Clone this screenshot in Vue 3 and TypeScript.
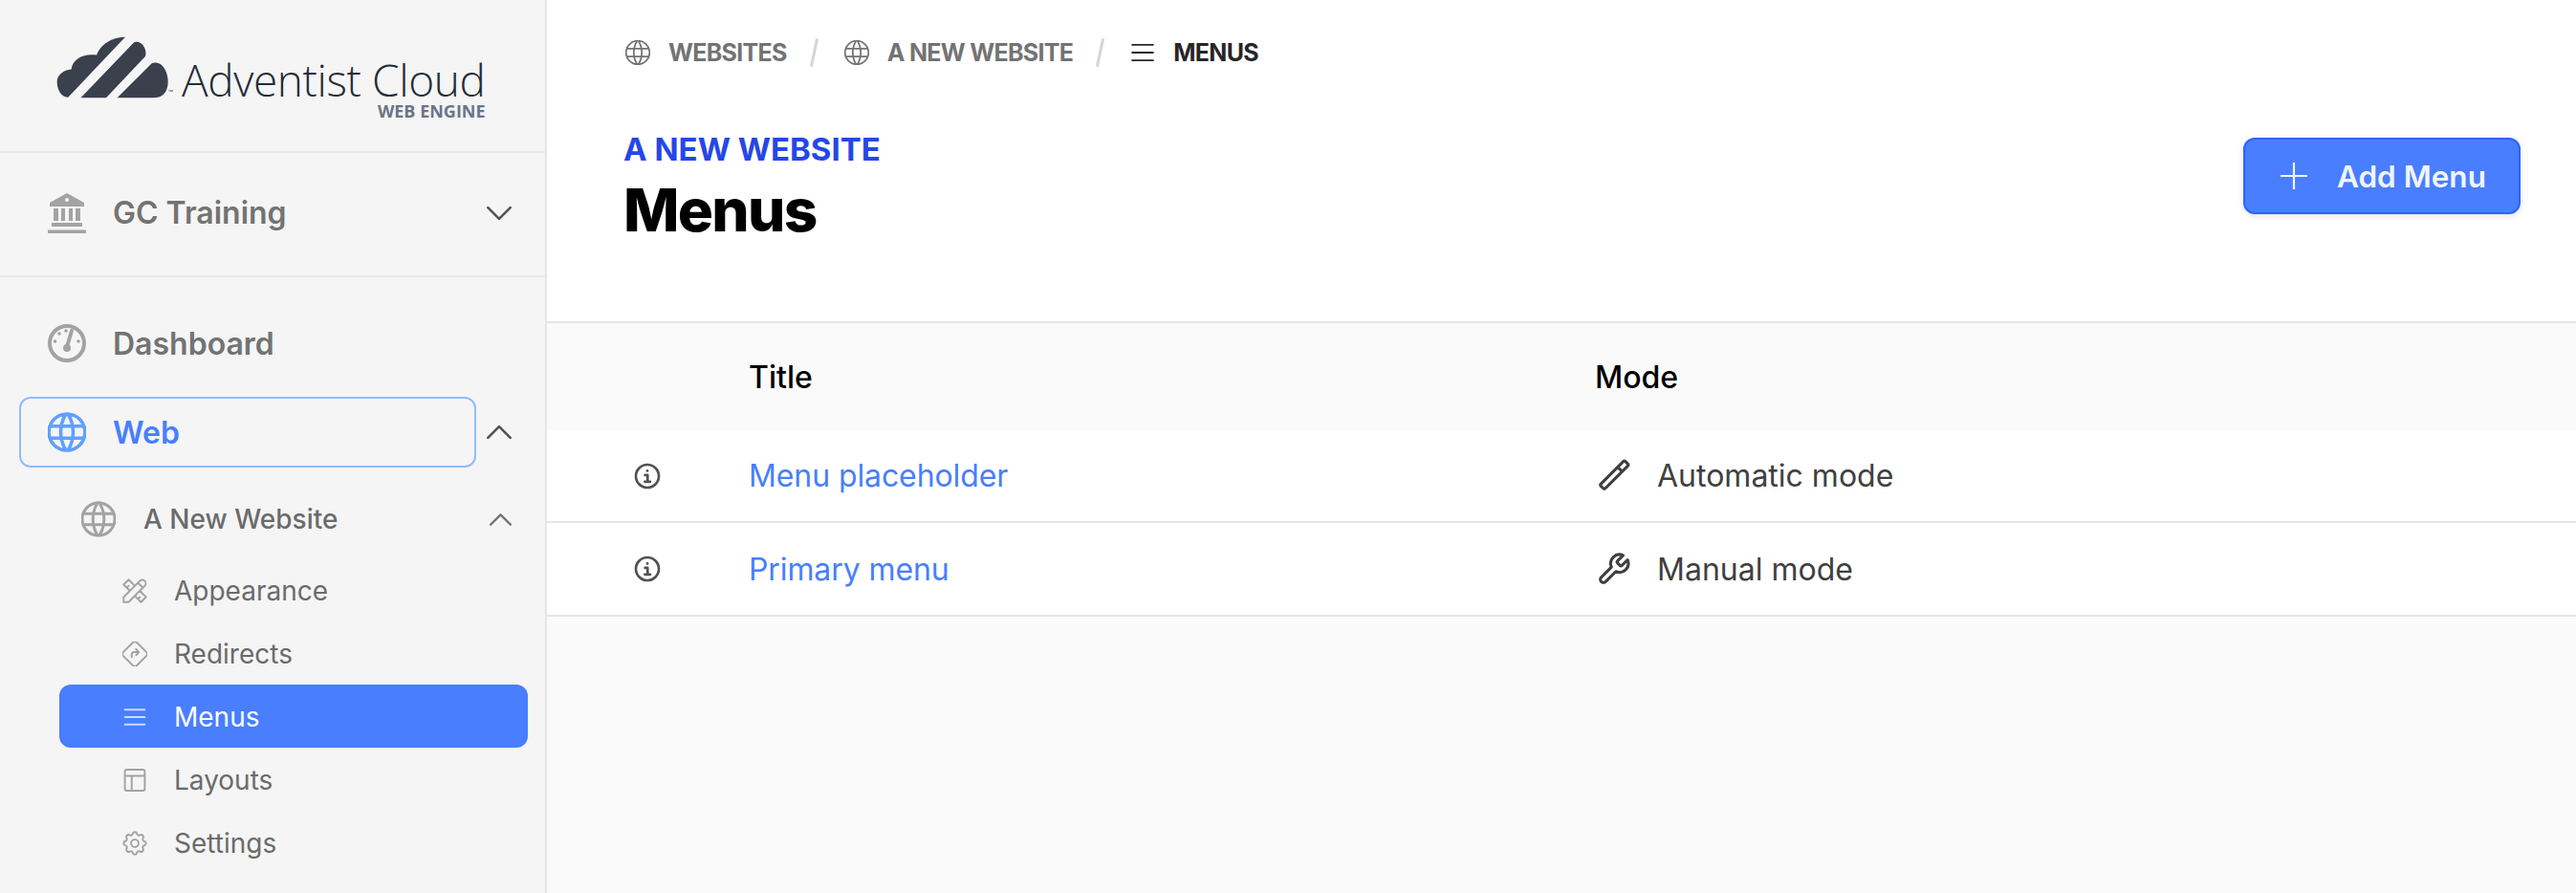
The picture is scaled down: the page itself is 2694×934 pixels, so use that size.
<script setup lang="ts">
const circle = 'M3 12a9 9 0 1 0 18 0a9 9 0 1 0-18 0'

const icons: Record<string, string> = {
  globe: `${circle}M3.6 9h16.8M3.6 15h16.8M11.5 3a17 17 0 0 0 0 18M12.5 3a17 17 0 0 1 0 18`,
  tools: 'M3 21h4l13-13a1.5 1.5 0 0 0-4-4L3 17v4M14.5 5.5l4 4M12 8L7 3 3 7l5 5M7 8L5.5 9.5M16 12l5 5-4 4-5-5M16 17l-1.5 1.5',
  redirect: 'M10.6 2.6a2 2 0 0 1 2.8 0l8 8a2 2 0 0 1 0 2.8l-8 8a2 2 0 0 1-2.8 0l-8-8a2 2 0 0 1 0-2.8zM9.5 14.5v-2a2 2 0 0 1 2-2h3.5M13 8l2.2 2.5-2.2 2.5',
  menu: 'M4 6h16M4 12h16M4 18h16',
  layout: 'M5.5 3.5h13a1.5 1.5 0 0 1 1.5 1.5v14a1.5 1.5 0 0 1-1.5 1.5h-13a1.5 1.5 0 0 1-1.5-1.5V5a1.5 1.5 0 0 1 1.5-1.5zM4 8.5h16M9.5 8.5v12',
  settings: 'M10.325 4.317c.426-1.756 2.924-1.756 3.35 0a1.724 1.724 0 0 0 2.573 1.066c1.543-.94 3.31.826 2.37 2.37a1.724 1.724 0 0 0 1.065 2.572c1.756.426 1.756 2.924 0 3.35a1.724 1.724 0 0 0-1.066 2.573c.94 1.543-.826 3.31-2.37 2.37a1.724 1.724 0 0 0-2.572 1.065c-.426 1.756-2.924 1.756-3.35 0a1.724 1.724 0 0 0-2.573-1.066c-1.543.94-3.31-.826-2.37-2.37a1.724 1.724 0 0 0-1.065-2.572c-1.756-.426-1.756-2.924 0-3.35a1.724 1.724 0 0 0 1.066-2.573c-.94-1.543.826-3.31 2.37-2.37 1 .608 2.296.07 2.572-1.065zM9 12a3 3 0 1 0 6 0a3 3 0 1 0-6 0',
  info: `${circle}M11.9 7.8h.2M10.2 11.2h2v5M10 16.4h4.2`,
  pencil: 'M18.6 2.4a1 1 0 0 1 1.4 0l1.6 1.6a1 1 0 0 1 0 1.4L6.4 20.6a1 1 0 0 1-1.4 0l-1.6-1.6a1 1 0 0 1 0-1.4zM14.8 6.2l3 3',
  wrench: 'M14.7 6.3a1 1 0 0 0 0 1.4l1.6 1.6a1 1 0 0 0 1.4 0l3.77-3.77a6 6 0 0 1-7.94 7.94l-6.91 6.91a2.12 2.12 0 0 1-3-3l6.91-6.91a6 6 0 0 1 7.94-7.94l-3.76 3.76z',
  plus: 'M12 3v18M3 12h18',
  chevronDown: 'M3 7.5l9 9 9-9',
  chevronUp: 'M3 16.5l9-9 9 9',
}

const subItems = [
  {label: 'Appearance', icon: 'tools'},
  {label: 'Redirects', icon: 'redirect'},
  {label: 'Menus', icon: 'menu', active: true},
  {label: 'Layouts', icon: 'layout'},
  {label: 'Settings', icon: 'settings'},
]

const crumbs = [
  {label: 'Websites', icon: 'globe'},
  {label: 'A New Website', icon: 'globe'},
  {label: 'Menus', icon: 'menu', current: true},
]

const rows = [
  {title: 'Menu placeholder', mode: 'Automatic mode', icon: 'pencil'},
  {title: 'Primary menu', mode: 'Manual mode', icon: 'wrench'},
]
</script>

<template>
  <div class="app">
    <aside class="sidebar">
      <div class="brand">
        <svg class="cloud" viewBox="55 40 362 205">
          <path d="M275 48L95 238C75 240 60 215 60 190C60 168 80 152 105 150C108 120 140 98 185 105C195 75 230 48 275 48Z" />
          <path d="M135 240L300 68C315 55 340 72 340 100C340 106 338 110 334 114L215 240Z" />
          <path d="M250 240L358 132C385 118 410 150 410 190C410 222 392 240 365 240Z" />
        </svg>
        <span class="tm">™</span>
        <div class="wordmark">
          <span class="wordmark-name">Adventist Cloud</span>
          <span class="wordmark-sub">WEB ENGINE</span>
        </div>
      </div>

      <div class="org">
        <svg class="org-icon" viewBox="0 0 40 44">
          <path d="M20 1L38 11V15H2V11ZM20 6a2 2 0 1 0 .01 0ZM6 17h5v13H6ZM14 17h4v13h-4ZM22 17h4v13h-4ZM29 17h5v13h-5ZM4 32h32v4H4ZM1 39.5h38a1.6 1.6 0 0 1 0 3.5H1a1.6 1.6 0 0 1 0-3.5Z" />
        </svg>
        <span class="org-name">GC Training</span>
        <svg class="chevron" viewBox="2 2 20 20"><path :d="icons.chevronDown" /></svg>
      </div>

      <nav class="nav">
        <div class="nav-row">
          <a class="nav-top">
            <svg class="nav-icon gauge" viewBox="0 0 40 44">
              <circle cx="20" cy="22" r="18" />
              <path class="needle" d="M25 9L20.5 24" />
              <circle class="dot" cx="20" cy="27" r="4" />
              <circle class="dot" cx="12" cy="12" r="1.8" />
              <circle class="dot" cx="19" cy="9" r="1.8" />
              <circle class="dot" cx="7.5" cy="20" r="1.8" />
              <circle class="dot" cx="32" cy="20" r="1.8" />
            </svg>
            <span>Dashboard</span>
          </a>
        </div>
        <div class="nav-row web-row">
          <a class="nav-top selected">
            <svg class="nav-icon globe" viewBox="2.5 2.5 19 19"><path :d="icons.globe" /></svg>
            <span>Web</span>
          </a>
          <svg class="chevron" viewBox="2 2 20 20"><path :d="icons.chevronUp" /></svg>
        </div>

        <div class="site">
          <svg class="site-icon" viewBox="2.5 2.5 19 19"><path :d="icons.globe" /></svg>
          <span class="site-name">A New Website</span>
          <svg class="chevron small" viewBox="2 2 20 20"><path :d="icons.chevronUp" /></svg>
        </div>

        <ul class="sub-list">
          <li v-for="item in subItems" :key="item.label" class="sub-item" :class="{active: item.active}">
            <svg class="sub-icon" viewBox="2 2 20 20"><path :d="icons[item.icon]" /></svg>
            <span>{{ item.label }}</span>
          </li>
        </ul>
      </nav>
    </aside>

    <main class="main">
      <header class="header">
        <div class="breadcrumbs">
          <template v-for="(crumb, i) in crumbs" :key="crumb.label">
            <span v-if="i > 0" class="crumb-sep"></span>
            <span class="crumb" :class="{current: crumb.current}">
              <svg class="crumb-icon" viewBox="2.5 2.5 19 19"><path :d="icons[crumb.icon]" /></svg>
              {{ crumb.label }}
            </span>
          </template>
        </div>
        <div class="title-row">
          <div class="title-block">
            <div class="eyebrow">A NEW WEBSITE</div>
            <h1 class="title">Menus</h1>
          </div>
          <button class="add-btn">
            <svg class="add-icon" viewBox="3 3 18 18"><path :d="icons.plus" /></svg>
            Add Menu
          </button>
        </div>
      </header>

      <div class="table">
        <div class="table-head">
          <span></span>
          <span>Title</span>
          <span>Mode</span>
        </div>
        <div v-for="row in rows" :key="row.title" class="table-row">
          <span class="info-cell">
            <svg class="info-icon" viewBox="0 0 24 24"><path :d="icons.info" /></svg>
          </span>
          <a class="row-title">{{ row.title }}</a>
          <span class="row-mode">
            <svg class="mode-icon" viewBox="0 0 24 24"><path :d="icons[row.icon]" /></svg>
            {{ row.mode }}
          </span>
        </div>
      </div>
    </main>
  </div>
</template>

<style>
html, body {
  margin: 0;
  background: #fafafa;
}
</style>

<style scoped>
.app {
  display: flex;
  height: 934px;
  width: 2694px;
  overflow: hidden;
  font-family: Inter, "Liberation Sans", sans-serif;
}
svg {
  flex: none;
  fill: none;
  stroke: currentColor;
  stroke-width: 2;
  stroke-linecap: round;
  stroke-linejoin: round;
}
.sidebar {
  flex: none;
  box-sizing: border-box;
  width: 572px;
  background: #f5f5f5;
  border-right: 2px solid #e5e5e5;
}
.brand {
  box-sizing: border-box;
  height: 160px;
  padding: 36px 0 0 58px;
  display: flex;
  align-items: flex-start;
  border-bottom: 2px solid #e8e8e8;
}
.cloud {
  width: 120px;
  height: 68px;
  fill: #3a404c;
  stroke: none;
}
.tm {
  font-size: 8px;
  color: #3a404c;
  margin: 56px 0 0 -2px;
  width: 10px;
}
.wordmark {
  display: flex;
  flex-direction: column;
  align-items: flex-end;
  margin-left: 4px;
  font-family: "Open Sans", sans-serif;
}
.wordmark-name {
  font-size: 46px;
  font-weight: 350;
  line-height: 47px;
  color: #262c38;
  letter-spacing: -0.4px;
  margin-top: 23.5px;
}
.wordmark-sub {
  font-size: 18px;
  font-weight: 700;
  line-height: 18px;
  color: #6b7488;
}
.org {
  box-sizing: border-box;
  height: 130px;
  display: flex;
  align-items: center;
  padding: 0 0 3px 50px;
  border-bottom: 2px solid #e8e8e8;
}
.org-icon {
  width: 40px;
  height: 44px;
  fill: #a3a3a3;
  stroke: none;
  fill-rule: evenodd;
}
.org-name {
  margin-left: 28px;
  flex: 1;
  font-size: 32px;
  font-weight: 600;
  color: #737373;
}
.chevron {
  width: 26px;
  height: 26px;
  color: #525252;
  margin-right: 35px;
}
.chevron.small {
  width: 23px;
  height: 23px;
  color: #737373;
  margin-right: 35px;
}
.nav {
  padding-top: 32px;
}
.nav-row {
  display: flex;
  align-items: center;
  margin-left: 20px;
}
.web-row {
  margin-top: 19px;
}
.web-row .chevron {
  margin-left: 11px;
}
.nav-top {
  box-sizing: border-box;
  width: 479px;
  height: 74px;
  display: flex;
  align-items: center;
  gap: 28px;
  padding-left: 28px;
  border: 2px solid transparent;
  border-radius: 12px;
  font-size: 32px;
  font-weight: 600;
  color: #737373;
}
.nav-top.selected {
  border-color: #93bbfd;
  color: #487eff;
}
.nav-icon {
  width: 40px;
  height: 44px;
  color: #a3a3a3;
}
.nav-icon.globe {
  stroke-width: 1.7;
}
.gauge {
  stroke-width: 4;
}
.gauge .dot {
  fill: currentColor;
  stroke: none;
}
.selected .nav-icon {
  color: #60a0ff;
}
.site {
  height: 50px;
  margin-top: 28px;
  padding-top: 1px;
  display: flex;
  align-items: center;
  padding-left: 85px;
}
.site-icon {
  width: 36px;
  height: 40px;
  color: #a3a3a3;
  stroke-width: 1.6;
}
.site-name {
  margin-left: 29px;
  flex: 1;
  font-size: 28px;
  font-weight: 500;
  color: #6b6b6b;
}
.sub-list {
  list-style: none;
  margin: 16px 0 0 62px;
  padding: 0;
  width: 490px;
}
.sub-item {
  box-sizing: border-box;
  height: 66px;
  padding-top: 2px;
  display: flex;
  align-items: center;
  gap: 28px;
  padding-left: 66px;
  border-radius: 12px;
  font-size: 28px;
  color: #6b6b6b;
}
.sub-icon {
  width: 26px;
  height: 26px;
  color: #a3a3a3;
  stroke-width: 1.5;
}
.sub-item.active {
  background: #487eff;
  color: #fff;
}
.sub-item.active .sub-icon {
  color: #c9dcff;
}
.main {
  flex: 1;
  min-width: 0;
}
.header {
  box-sizing: border-box;
  height: 338px;
  background: #fff;
  padding: 40px 58px 0 81px;
  border-bottom: 2px solid #e5e5e5;
}
.breadcrumbs {
  height: 30px;
  padding-left: 1px;
  display: flex;
  align-items: center;
}
.crumb {
  display: flex;
  align-items: center;
  gap: 19px;
  font-size: 25px;
  font-weight: 700;
  letter-spacing: -0.7px;
  text-transform: uppercase;
  color: #737373;
}
.crumb.current {
  color: #262626;
}
.crumb-icon {
  width: 26px;
  height: 26px;
  color: #737373;
  stroke-width: 1.3;
}
.current .crumb-icon {
  color: #262626;
}
.crumb-sep {
  width: 3px;
  height: 30px;
  margin: 0 30px 0 27px;
  background: #d4d4d4;
  transform: rotate(12deg);
}
.title-row {
  display: flex;
  justify-content: space-between;
  align-items: flex-start;
  margin-top: 66px;
}
.title-block {
  margin-left: -1px;
}
.eyebrow {
  font-size: 33px;
  line-height: 38px;
  margin-top: 1px;
  font-weight: 700;
  color: #2547e8;
}
.title {
  margin: 10px 0 0;
  font-size: 62px;
  line-height: 70px;
  font-weight: 800;
  letter-spacing: -1.7px;
  color: #000;
}
.add-btn {
  box-sizing: border-box;
  width: 290px;
  height: 80px;
  margin-top: 8px;
  display: flex;
  align-items: center;
  gap: 31px;
  padding: 0 0 0 37px;
  background: #487eff;
  border: 2px solid #2e63f6;
  border-radius: 12px;
  box-shadow: 0 2px 6px rgba(0, 0, 0, 0.12);
  font-family: inherit;
  font-size: 31.5px;
  font-weight: 600;
  color: #f0f5ff;
}
.add-icon {
  width: 28px;
  height: 28px;
  stroke-width: 1.4;
}
.table-head,
.table-row {
  display: grid;
  grid-template-columns: 211px 885px 1fr;
  align-items: center;
  font-size: 32px;
}
.table-head {
  height: 112px;
  font-weight: 500;
  color: #000;
}
.table-row {
  box-sizing: border-box;
  height: 97px;
  background: #fff;
  border-bottom: 2px solid #e5e5e5;
}
.table-row + .table-row {
  height: 98px;
}
.info-cell {
  display: flex;
  justify-content: center;
  padding-right: 1px;
}
.info-icon {
  width: 32px;
  height: 32px;
  color: #525252;
}
.row-title {
  color: #487eff;
  letter-spacing: -0.1px;
}
.row-mode {
  display: flex;
  align-items: center;
  gap: 27px;
  padding-left: 1px;
  color: #404040;
}
.mode-icon {
  width: 37px;
  height: 37px;
  color: #404040;
}
</style>
